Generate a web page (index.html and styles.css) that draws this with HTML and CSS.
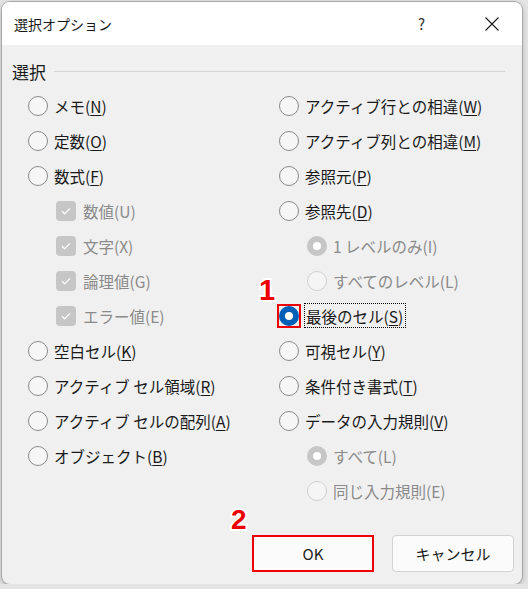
FILE: index.html
```html
<!DOCTYPE html>
<html lang="ja">
<head>
  <meta charset="UTF-8" />
  <title>選択オプション</title>
  <link rel="stylesheet" href="styles.css">
</head>
<body>
  <div class="dialog">
    <div class="titlebar">
      <span class="title">選択オプション</span>
      <span class="help">?</span>
      <svg class="close" width="14" height="14" viewBox="0 0 14 14">
        <path d="M0.5 0.5 L13.5 13.5 M13.5 0.5 L0.5 13.5" stroke="#1a1a1a" stroke-width="1.1" fill="none"/>
      </svg>
    </div>

    <div class="content">
      <div class="group-head">
        <span>選択</span>
        <div class="rule"></div>
      </div>

      <div class="columns">
        <div class="col">
          <div class="row"><span class="radio"></span><span>メモ(<u>N</u>)</span></div>
          <div class="row"><span class="radio"></span><span>定数(<u>O</u>)</span></div>
          <div class="row"><span class="radio"></span><span>数式(<u>F</u>)</span></div>
          <div class="row sub off"><span class="check"><svg width="20" height="20" viewBox="0 0 20 20"><path d="M6 10.3 L8.6 12.8 L14 7.4" stroke="#fff" stroke-width="1.2" fill="none"/></svg></span><span>数値(U)</span></div>
          <div class="row sub off"><span class="check"><svg width="20" height="20" viewBox="0 0 20 20"><path d="M6 10.3 L8.6 12.8 L14 7.4" stroke="#fff" stroke-width="1.2" fill="none"/></svg></span><span>文字(X)</span></div>
          <div class="row sub off"><span class="check"><svg width="20" height="20" viewBox="0 0 20 20"><path d="M6 10.3 L8.6 12.8 L14 7.4" stroke="#fff" stroke-width="1.2" fill="none"/></svg></span><span>論理値(G)</span></div>
          <div class="row sub off"><span class="check"><svg width="20" height="20" viewBox="0 0 20 20"><path d="M6 10.3 L8.6 12.8 L14 7.4" stroke="#fff" stroke-width="1.2" fill="none"/></svg></span><span>エラー値(E)</span></div>
          <div class="row"><span class="radio"></span><span>空白セル(<u>K</u>)</span></div>
          <div class="row"><span class="radio"></span><span>アクティブ セル領域(<u>R</u>)</span></div>
          <div class="row"><span class="radio"></span><span>アクティブ セルの配列(<u>A</u>)</span></div>
          <div class="row"><span class="radio"></span><span>オブジェクト(<u>B</u>)</span></div>
        </div>

        <div class="col">
          <div class="row"><span class="radio"></span><span>アクティブ行との相違(<u>W</u>)</span></div>
          <div class="row"><span class="radio"></span><span>アクティブ列との相違(<u>M</u>)</span></div>
          <div class="row"><span class="radio"></span><span>参照元(<u>P</u>)</span></div>
          <div class="row"><span class="radio"></span><span>参照先(<u>D</u>)</span></div>
          <div class="row sub off"><span class="radio on"></span><span>1 レベルのみ(I)</span></div>
          <div class="row sub off"><span class="radio"></span><span>すべてのレベル(L)</span></div>
          <div class="row"><span class="mark"><span class="radio on"></span></span><span class="focus">最後のセル(<u>S</u>)</span></div>
          <div class="row"><span class="radio"></span><span>可視セル(<u>Y</u>)</span></div>
          <div class="row"><span class="radio"></span><span>条件付き書式(<u>T</u>)</span></div>
          <div class="row"><span class="radio"></span><span>データの入力規則(<u>V</u>)</span></div>
          <div class="row sub off"><span class="radio on"></span><span>すべて(L)</span></div>
          <div class="row sub off"><span class="radio"></span><span>同じ入力規則(E)</span></div>
        </div>
      </div>

      <div class="buttons">
        <button class="btn ok">OK</button>
        <button class="btn">キャンセル</button>
      </div>
    </div>

    <span class="step step-1">1</span>
    <span class="step step-2">2</span>
  </div>
</body>
</html>
```

FILE: styles.css
```css
body {
  margin: 0;
  background: #e4e4e4;
  font-family: "Noto Sans CJK JP", "Noto Sans", sans-serif;
  color: #1a1a1a;
}

.dialog {
  position: relative;
  margin: 2px 0 0 2px;
  width: 520px;
  height: 582px;
  border-radius: 8px;
  overflow: hidden;
  background: #f0f0f0;
  box-shadow: 0 0 0 1px #a8a8a8, 0 2px 6px rgba(0,0,0,0.25);
}

.titlebar {
  height: 43px;
  background: #ffffff;
  display: flex;
  align-items: center;
  padding-left: 12px;
}

.title {
  flex: 1;
  font-size: 14px;
}

.help {
  font-size: 15px;
  margin-right: 60px;
  color: #333;
}

.close {
  margin-right: 23px;
}

.content {
  padding: 16px 8px 0 10px;
}

.group-head {
  display: flex;
  align-items: center;
  gap: 8px;
  height: 20px;
  font-size: 17px;
  padding-right: 9px;
}

.rule {
  flex: 1;
  height: 1px;
  background: #d6d6d6;
}

.columns {
  display: grid;
  grid-template-columns: 251px 1fr;
  margin-top: 7px;
  padding-left: 16px;
}

.row {
  height: 35px;
  display: flex;
  align-items: center;
  gap: 6px;
  font-size: 15.5px;
  white-space: nowrap;
}

.row u {
  text-decoration-thickness: 1px;
  text-underline-offset: 2px;
}

.sub {
  padding-left: 28px;
}

.off {
  color: #8a8a8a;
}

.radio {
  box-sizing: border-box;
  width: 20px;
  height: 20px;
  border-radius: 50%;
  border: 1px solid #8a8a8a;
  background: #f6f6f6;
  flex: none;
  display: flex;
  align-items: center;
  justify-content: center;
}

.radio.on {
  border: none;
  background: #005fb8;
}

.radio.on::after {
  content: "";
  width: 8px;
  height: 8px;
  border-radius: 50%;
  background: #ffffff;
}

.off .radio {
  border-color: #d0d0d0;
  background: #f5f5f5;
}

.off .radio.on {
  background: #c6c6c6;
}

.mark {
  display: flex;
  flex: none;
  outline: 2px solid #ee0000;
}

.check {
  width: 20px;
  height: 20px;
  border-radius: 4px;
  background: #c6c6c6;
  flex: none;
  margin-right: 1px;
}

.check svg {
  display: block;
}

.focus {
  border: 1px dotted #000;
  padding: 1px 2px 0 1px;
  margin-left: -1px;
}

.buttons {
  display: flex;
  justify-content: flex-end;
  gap: 18px;
  margin-top: 27px;
}

.btn {
  width: 122px;
  height: 37px;
  font-family: inherit;
  font-size: 15px;
  color: #1a1a1a;
  background: #fbfbfb;
  border: 1px solid #d2d2d2;
  border-radius: 4px;
}

.btn.ok {
  border: 2px solid #ee0000;
  border-radius: 0;
}

.step {
  position: absolute;
  font-family: "Liberation Sans", sans-serif;
  font-weight: bold;
  line-height: 1;
  color: #ee0000;
  -webkit-text-stroke: 4px #ffffff;
  paint-order: stroke fill;
}

.step-1 {
  font-size: 29px;
  left: 257px;
  top: 274px;
}

.step-2 {
  font-size: 28px;
  left: 229px;
  top: 504px;
}
```
